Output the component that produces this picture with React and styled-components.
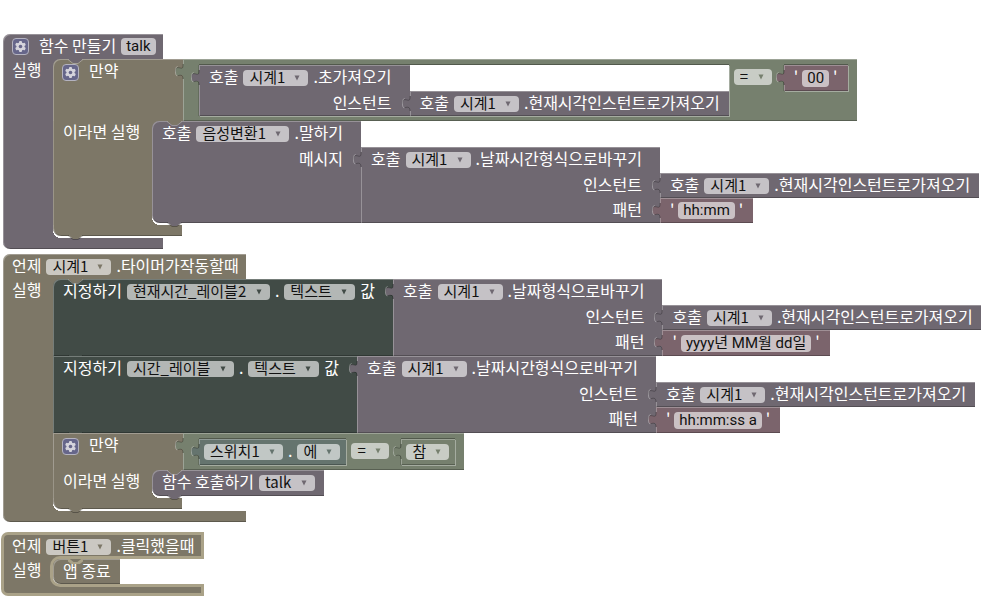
import React from "react";
import styled, { createGlobalStyle, css } from "styled-components";

const GlobalStyle = createGlobalStyle`
  * { box-sizing: border-box; }
  body {
    margin: 0;
    background: #ffffff;
    color: #ffffff;
    font-family: "Noto Sans CJK KR", "Noto Sans", sans-serif;
    font-size: 16px;
    line-height: 16px;
    white-space: nowrap;
  }
`;

const OLIVE = "#7d7767";
const PURPLE = "#6f6871";
const GREEN = "#76806e";
const PINK = "#7b646c";
const FOREST = "#414b46";
const TEAL = "#65746e";
const HIGHLIGHT = "#aaa288";

const raised = css`
  box-shadow: inset 1px 1px 0 rgba(255, 255, 255, 0.28),
    inset 0 -1px 0 rgba(0, 0, 0, 0.25);
`;

const Workspace = styled.main`
  display: flex;
  flex-direction: column;
  align-items: flex-start;
  min-height: 100vh;
  padding: 34px 0 12px 3px;
  overflow: hidden;
`;

/* C-shaped blocks: events and procedures */
const Container = styled.section`
  display: grid;
  width: max-content;
  margin-bottom: ${(p) => p.$after || 0}px;
  margin-left: ${(p) => (p.$selected ? -2 : 0)}px;
`;

const ContainerHeader = styled.header`
  position: relative;
  display: flex;
  align-items: center;
  gap: 5px;
  height: ${(p) => (p.$selected ? 27 : 25)}px;
  padding: 0 7px 0 9px;
  background: ${(p) => p.$color};
  border-top-left-radius: 7px;
  box-shadow: inset 1px 1px 0 rgba(255, 255, 255, 0.28);
  ${(p) =>
    p.$selected &&
    css`
      border: 3px solid ${HIGHLIGHT};
      border-bottom: 0;
      padding: 0 6px 0 8px;
      box-shadow: none;
    `}
`;

const ContainerBody = styled.div`
  display: flex;
  width: 0;
  min-width: 100%;
`;

const Spine = styled.div`
  flex: none;
  width: ${(p) => (p.$selected ? 52 : 50)}px;
  padding: 2px 0 0 8px;
  background: ${(p) => p.$color};
  border-left: ${(p) => (p.$selected ? `3px solid ${HIGHLIGHT}` : "1px solid rgba(255, 255, 255, 0.28)")};
`;

const ContainerFooter = styled.footer`
  height: ${(p) => (p.$selected ? 12 : 11)}px;
  background: ${(p) => p.$color};
  border-bottom-left-radius: 7px;
  box-shadow: inset 1px 0 0 rgba(255, 255, 255, 0.28), inset 0 -1px 0 rgba(0, 0, 0, 0.25);
  ${(p) =>
    p.$selected &&
    css`
      border: 3px solid ${HIGHLIGHT};
      border-top: 0;
      box-shadow: none;
    `}
`;

const Mouth = styled.div`
  position: relative;
  display: flex;
  flex: 1 0 auto;
  flex-direction: column;
  align-items: flex-start;
  padding-bottom: ${(p) => (p.$selected ? 0 : 2)}px;
  &::before {
    content: "";
    position: absolute;
    top: 0;
    left: 0;
    width: 8px;
    height: 8px;
    background: ${(p) => p.$color};
  }
  &::after {
    content: "";
    position: absolute;
    bottom: 0;
    left: 0;
    width: 8px;
    height: 8px;
    background: radial-gradient(circle at 100% 0, transparent 8px, ${(p) => p.$color} 8px);
  }
  ${(p) =>
    p.$selected &&
    css`
      &::after {
        inset: 0;
        width: auto;
        height: auto;
        background: none;
        border-radius: 7px 0 0 7px;
        box-shadow: 0 0 0 3px ${HIGHLIGHT};
        clip-path: inset(-3px 0 -3px -3px);
      }
    `}
`;

const Notch = styled.svg`
  position: absolute;
  left: 15px;
  z-index: 3;
  width: 15px;
  height: 5px;
  ${(p) => (p.$below ? "bottom: -4px;" : "top: 0;")}
`;

const Statement = styled.div`
  position: relative;
  z-index: 1;
  display: flex;
  width: max-content;
  min-height: ${(p) => p.$height || 26}px;
`;

/* Solid coloured part of a block */
const Face = styled.div`
  display: flex;
  flex-direction: column;
  min-width: 0;
  padding: 0 ${(p) => (p.$open ? 18 : 9)}px 0 10px;
  background: ${(p) => p.$color};
  border-top-left-radius: ${(p) => (p.$roundTop ? 7 : 0)}px;
  border-bottom-left-radius: ${(p) => (p.$roundBottom ? 8 : 0)}px;
  ${raised}
`;

const Line = styled.div`
  display: flex;
  align-items: center;
  justify-content: ${(p) => (p.$right ? "flex-end" : "flex-start")};
  gap: 5px;
  height: ${(p) => (p.$low ? 25 : 26)}px;
`;

const Label = styled.span`
  display: block;
  padding-bottom: 4px;
`;

const Sockets = styled.div`
  display: flex;
  flex-direction: column;
  align-items: flex-start;
  padding-top: ${(p) => (p.$inline ? 0 : 26)}px;
  & > :last-child { flex: 1; }
`;

const ValueShell = styled.div`
  position: relative;
  display: flex;
  width: max-content;
  min-height: 25px;
`;

const Tab = styled.svg`
  position: absolute;
  z-index: 2;
  top: 5px;
  left: -8px;
  width: 10px;
  height: 15px;
`;

const TextFace = styled.div`
  display: flex;
  align-items: center;
  gap: 4px;
  padding: 0 10px;
  background: ${PINK};
  ${raised}
`;

const Compare = styled.div`
  display: flex;
  align-items: flex-start;
  padding: 6px 9px 5px 16px;
  background: ${GREEN};
  ${raised}
`;

const Inset = styled.div`
  display: flex;
  min-height: 26px;
  background: ${(p) => p.$color || "#ffffff"};
  box-shadow: 0 -1px 0 rgba(0, 0, 0, 0.3), 1px 1px 0 rgba(255, 255, 255, 0.35),
    -1px 0 0 rgba(0, 0, 0, 0.15);
`;

const Operator = styled.div`
  display: flex;
  align-items: center;
  height: 24px;
  padding: 0 12px 0 5px;
`;

const FieldRow = styled.div`
  display: flex;
  align-items: center;
  gap: 5px;
  padding: 0 6px 0 5px;
  ${raised}
`;

/* If block */
const IfBlock = styled.div`
  position: relative;
  z-index: 1;
  width: max-content;
`;

const IfRow = styled.div`
  display: flex;
`;

const IfTest = styled.div`
  width: 130px;
  padding-left: 9px;
  background: ${OLIVE};
  border-top-left-radius: ${(p) => (p.$roundTop ? 7 : 0)}px;
  box-shadow: inset 1px 1px 0 rgba(255, 255, 255, 0.28);
`;

const IfThen = styled.div`
  width: 99px;
  padding: 2px 0 0 9px;
  background: ${OLIVE};
  border-left: 1px solid #9a9588;
`;

const IfFooter = styled.div`
  position: relative;
  width: 129px;
  height: 11px;
  background: ${OLIVE};
  border-bottom-left-radius: 8px;
  box-shadow: inset 1px 0 0 rgba(255, 255, 255, 0.28), inset 0 -1px 0 rgba(0, 0, 0, 0.25);
`;

/* Fields */
const Picker = styled.label`
  position: relative;
  display: flex;
  align-items: center;
  height: 16px;
  border-radius: 4px;
  background: rgba(255, 255, 255, 0.6);
`;

const PickerSelect = styled.select`
  appearance: none;
  flex: none;
  height: 24px;
  margin: 0;
  padding: 0 23px 2px 6px;
  border: 0;
  background: transparent;
  color: #111111;
  font: inherit;
  font-size: 15px;
  line-height: 22px;
`;

const PickerArrow = styled.svg`
  position: absolute;
  top: 5px;
  right: 8px;
  width: 6px;
  height: 6px;
  pointer-events: none;
`;

const TextField = styled.input`
  field-sizing: content;
  height: 17px;
  margin: 0;
  padding: 0 5px;
  border: 0;
  border-radius: 4px;
  background: rgba(255, 255, 255, 0.6);
  color: #111111;
  font-family: Roboto, "Noto Sans CJK KR", sans-serif;
  font-size: 15px;
  line-height: 17px;
`;

const GearButton = styled.button`
  flex: none;
  width: 17px;
  height: 17px;
  margin: 0 5px 0 0;
  padding: 0;
  border: 1px solid #b4b3c0;
  border-radius: 4px;
  background: #66668a;
  svg { display: block; }
`;

function Gear() {
  return (
    <GearButton type="button" aria-label="설정">
      <svg width="15" height="15" viewBox="0 0 15 15">
        <g fill="#d5d4dc">
          <rect x="6" y="2" width="3" height="11" rx="1" />
          <rect x="6" y="2" width="3" height="11" rx="1" transform="rotate(60 7.5 7.5)" />
          <rect x="6" y="2" width="3" height="11" rx="1" transform="rotate(120 7.5 7.5)" />
          <circle cx="7.5" cy="7.5" r="4" />
        </g>
        <circle cx="7.5" cy="7.5" r="1.8" fill="#66668a" />
      </svg>
    </GearButton>
  );
}

function Dropdown({ value, color }) {
  return (
    <Picker>
      <PickerSelect aria-label={value} defaultValue={value}>
        <option value={value}>{value}</option>
      </PickerSelect>
      <PickerArrow viewBox="0 0 6 6">
        <path d="M0.5 0.5h5L3 5.5z" fill={color} />
      </PickerArrow>
    </Picker>
  );
}

function Nub({ color, below, outline }) {
  return (
    <Notch $below={below} viewBox="0 0 15 5">
      <path d="M0 0 L5 4 H10 L15 0 Z" fill={color} />
      <path
        d="M0 0.5 L5 4.5 H10 L15 0.5"
        fill="none"
        stroke={outline || (below ? "rgba(0,0,0,.3)" : "rgba(255,255,255,.3)")}
        strokeWidth={outline ? 3 : 1}
      />
    </Notch>
  );
}

function Value({ color, children }) {
  return (
    <ValueShell>
      {children}
      <Tab viewBox="0 0 10 15">
        <path d="M10 0H8v2c0 6 -7.5 -3 -7.5 5.5s7.5 0 7.5 5.5v2h2z" fill={color} />
        <path d="M8 0v2c0 6 -7.5 -3 -7.5 5.5" fill="none" stroke="rgba(0,0,0,.25)" />
        <path d="M2.5 2.5c-1 0 -2 1.5 -2 5s1 4.5 2 4.5" fill="none" stroke="rgba(255,255,255,.35)" />
        <path d="M2.5 12c2 -1 5.5 -2 5.5 3" fill="none" stroke="rgba(0,0,0,.25)" />
      </Tab>
    </ValueShell>
  );
}

function CallLine({ target, method, low }) {
  return (
    <Line $low={low}>
      <Label>호출</Label>
      <Dropdown value={target} color={PURPLE} />
      <Label>{method}</Label>
    </Line>
  );
}

function Call({ target, method, args = [], low, roundTop, roundBottom }) {
  return (
    <>
      <Face $color={PURPLE} $open={args.length > 0} $roundTop={roundTop} $roundBottom={roundBottom}>
        <CallLine target={target} method={method} low={low} />
        {args.map((arg) => (
          <Line key={arg.label} $right $low>
            <Label>{arg.label}</Label>
          </Line>
        ))}
      </Face>
      {args.length > 0 && (
        <Sockets>
          {args.map((arg) => (
            <React.Fragment key={arg.label}>{arg.value}</React.Fragment>
          ))}
        </Sockets>
      )}
    </>
  );
}

function TextBlock({ text }) {
  return (
    <Value color={PINK}>
      <TextFace>
        <Label>'</Label>
        <TextField defaultValue={text} aria-label="문자열" size={text.length} />
        <Label>'</Label>
      </TextFace>
    </Value>
  );
}

function CurrentInstant() {
  return (
    <Value color={PURPLE}>
      <Call target="시계1" method=".현재시각인스턴트로가져오기" low />
    </Value>
  );
}

function FormatCall({ method, pattern }) {
  return (
    <Value color={PURPLE}>
      <Call
        target="시계1"
        method={method}
        args={[
          { label: "인스턴트", value: <CurrentInstant /> },
          { label: "패턴", value: <TextBlock text={pattern} /> },
        ]}
      />
    </Value>
  );
}

function SetProperty({ component, roundTop, children }) {
  return (
    <Statement $height={77}>
      <Face $color={FOREST} $open $roundTop={roundTop}>
        <Line>
          <Label>지정하기</Label>
          <Dropdown value={component} color={FOREST} />
          <Label>.</Label>
          <Dropdown value="텍스트" color={FOREST} />
          <Label>값</Label>
        </Line>
      </Face>
      <Sockets $inline>{children}</Sockets>
      <Nub color={FOREST} below />
    </Statement>
  );
}

function If({ test, roundTop, children }) {
  return (
    <IfBlock>
      <IfRow>
        <IfTest $roundTop={roundTop}>
          <Line>
            <Gear />
            <Label>만약</Label>
          </Line>
        </IfTest>
        <Value color={GREEN}>
          <Compare>{test}</Compare>
        </Value>
      </IfRow>
      <IfRow>
        <IfThen>이라면 실행</IfThen>
        <Mouth $color={OLIVE}>
          {children}
          <Nub color={OLIVE} />
        </Mouth>
      </IfRow>
      <IfFooter>
        <Nub color={OLIVE} below />
      </IfFooter>
    </IfBlock>
  );
}

function CBlock({ color, header, after, selected, children }) {
  return (
    <Container $after={after} $selected={selected}>
      <ContainerHeader $color={color} $selected={selected}>{header}</ContainerHeader>
      <ContainerBody>
        <Spine $color={color} $selected={selected}>실행</Spine>
        <Mouth $color={color} $selected={selected}>
          {children}
          <Nub color={color} outline={selected ? HIGHLIGHT : undefined} />
        </Mouth>
      </ContainerBody>
      <ContainerFooter $color={color} $selected={selected} />
    </Container>
  );
}

function EventHeader({ target, event }) {
  return (
    <>
      <Label>언제</Label>
      <Dropdown value={target} color={OLIVE} />
      <Label>{event}</Label>
    </>
  );
}

export default function App() {
  return (
    <>
      <GlobalStyle />
      <Workspace>
        <CBlock
          color={PURPLE}
          after={5}
          header={
            <>
              <Gear />
              <Label>함수 만들기</Label>
              <TextField defaultValue="talk" aria-label="함수 이름" size={4} />
            </>
          }
        >
          <If
            roundTop
            test={
              <>
                <Inset>
                  <Value color={PURPLE}>
                    <Call
                      target="시계1"
                      method=".초가져오기"
                      args={[{ label: "인스턴트", value: <CurrentInstant /> }]}
                    />
                  </Value>
                </Inset>
                <Operator>
                  <Dropdown value="=" color={GREEN} />
                </Operator>
                <Inset $color={PINK}>
                  <TextBlock text="00" />
                </Inset>
              </>
            }
          >
            <Statement>
              <Call
                target="음성변환1"
                method=".말하기"
                roundTop
                roundBottom
                args={[
                  {
                    label: "메시지",
                    value: <FormatCall method=".날짜시간형식으로바꾸기" pattern="hh:mm" />,
                  },
                ]}
              />
              <Nub color={PURPLE} below />
            </Statement>
          </If>
        </CBlock>

        <CBlock
          color={OLIVE}
          after={10}
          header={<EventHeader target="시계1" event=".타이머가작동할때" />}
        >
          <SetProperty component="현재시간_레이블2" roundTop>
            <FormatCall method=".날짜형식으로바꾸기" pattern="yyyy년 MM월 dd일" />
          </SetProperty>
          <SetProperty component="시간_레이블">
            <FormatCall method=".날짜시간형식으로바꾸기" pattern="hh:mm:ss a" />
          </SetProperty>
          <If
            test={
              <>
                <Inset $color={TEAL}>
                  <Value color={TEAL}>
                    <FieldRow>
                      <Dropdown value="스위치1" color={TEAL} />
                      <Label>.</Label>
                      <Dropdown value="에" color={TEAL} />
                    </FieldRow>
                  </Value>
                </Inset>
                <Operator>
                  <Dropdown value="=" color={GREEN} />
                </Operator>
                <Inset $color={GREEN}>
                  <Value color={GREEN}>
                    <FieldRow>
                      <Dropdown value="참" color={GREEN} />
                    </FieldRow>
                  </Value>
                </Inset>
              </>
            }
          >
            <Statement>
              <Face $color={PURPLE} $roundTop $roundBottom>
                <Line>
                  <Label>함수 호출하기</Label>
                  <Dropdown value="talk" color={PURPLE} />
                </Line>
              </Face>
              <Nub color={PURPLE} below />
            </Statement>
          </If>
        </CBlock>

        <CBlock
          color={OLIVE}
          selected
          header={<EventHeader target="버튼1" event=".클릭했을때" />}
        >
          <Statement $height={24}>
            <Face $color={OLIVE} $roundTop $roundBottom>
              <Line $low>
                <Label>앱 종료</Label>
              </Line>
            </Face>
          </Statement>
        </CBlock>
      </Workspace>
    </>
  );
}
